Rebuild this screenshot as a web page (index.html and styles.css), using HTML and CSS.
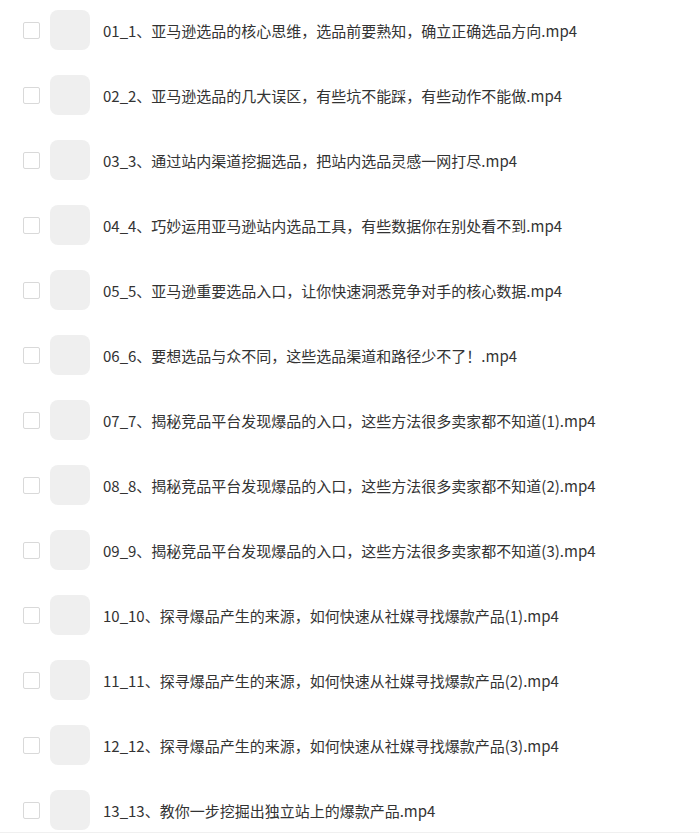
FILE: index.html
```html
<!doctype html>
<html lang="zh-CN">
<head>
    <meta charset="UTF-8">
    <title>课程文件列表</title>
<link rel="stylesheet" href="styles.css">
</head>
<body>
<ul class="file-list">
<li class="file-row"><span class="check"></span><span class="thumb"></span><span class="name">01_1、亚马逊选品的核心思维，选品前要熟知，确立正确选品方向.mp4</span></li>
<li class="file-row"><span class="check"></span><span class="thumb"></span><span class="name">02_2、亚马逊选品的几大误区，有些坑不能踩，有些动作不能做.mp4</span></li>
<li class="file-row"><span class="check"></span><span class="thumb"></span><span class="name">03_3、通过站内渠道挖掘选品，把站内选品灵感一网打尽.mp4</span></li>
<li class="file-row"><span class="check"></span><span class="thumb"></span><span class="name">04_4、巧妙运用亚马逊站内选品工具，有些数据你在别处看不到.mp4</span></li>
<li class="file-row"><span class="check"></span><span class="thumb"></span><span class="name">05_5、亚马逊重要选品入口，让你快速洞悉竞争对手的核心数据.mp4</span></li>
<li class="file-row"><span class="check"></span><span class="thumb"></span><span class="name">06_6、要想选品与众不同，这些选品渠道和路径少不了！.mp4</span></li>
<li class="file-row"><span class="check"></span><span class="thumb"></span><span class="name">07_7、揭秘竞品平台发现爆品的入口，这些方法很多卖家都不知道(1).mp4</span></li>
<li class="file-row"><span class="check"></span><span class="thumb"></span><span class="name">08_8、揭秘竞品平台发现爆品的入口，这些方法很多卖家都不知道(2).mp4</span></li>
<li class="file-row"><span class="check"></span><span class="thumb"></span><span class="name">09_9、揭秘竞品平台发现爆品的入口，这些方法很多卖家都不知道(3).mp4</span></li>
<li class="file-row"><span class="check"></span><span class="thumb"></span><span class="name">10_10、探寻爆品产生的来源，如何快速从社媒寻找爆款产品(1).mp4</span></li>
<li class="file-row"><span class="check"></span><span class="thumb"></span><span class="name">11_11、探寻爆品产生的来源，如何快速从社媒寻找爆款产品(2).mp4</span></li>
<li class="file-row"><span class="check"></span><span class="thumb"></span><span class="name">12_12、探寻爆品产生的来源，如何快速从社媒寻找爆款产品(3).mp4</span></li>
<li class="file-row"><span class="check"></span><span class="thumb"></span><span class="name">13_13、教你一步挖掘出独立站上的爆款产品.mp4</span></li>
</ul>
<div class="divider"></div>
</body>
</html>
```

FILE: styles.css
```css
body {
    margin: 0;
    background-color: #fff;
    font-family: "Noto Sans CJK SC", "Noto Sans", sans-serif;
    color: #333;
}
.file-list {
    list-style: none;
    margin: 0;
    padding: 10px 0 0 23px;
}
.file-row {
    display: flex;
    align-items: center;
    height: 40px;
    margin-bottom: 25px;
}
.file-row:last-child {
    margin-bottom: 0;
}
.check {
    width: 15px;
    height: 15px;
    border: 1px solid #d9d9d9;
    border-radius: 2px;
    box-sizing: content-box;
    flex: none;
}
.thumb {
    width: 40px;
    height: 40px;
    margin-left: 10px;
    border-radius: 8px;
    background-color: #efefef;
    flex: none;
}
.name {
    margin-left: 13px;
    font-size: 15px;
    white-space: nowrap;
}
.divider {
    margin-top: 2px;
    border-top: 1px solid #f0f0f0;
}
```
